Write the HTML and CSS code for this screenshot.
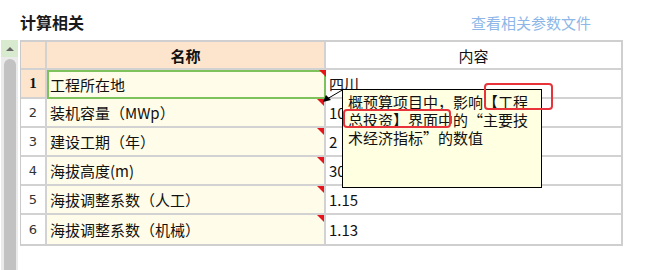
FILE: index.html
```html
<!DOCTYPE html>
<html lang="zh">
<head>
<meta charset="utf-8">
<link rel="stylesheet" href="styles.css">
</head>
<body>
<div class="page">
  <div class="topbar">
    <div class="title">计算相关</div>
    <a class="link">查看相关参数文件</a>
  </div>
  <div class="main">
    <div class="scrollbar">
      <div class="sb-up"><span class="sb-arrow"></span></div>
      <div class="sb-thumb"></div>
    </div>
    <div class="grid">
      <div class="hc rn"></div>
      <div class="hc name">名称</div>
      <div class="hc content">内容</div>

      <div class="c rn sel">1</div>
      <div class="c nm selcell"><span>工程所在地</span><i class="tri"></i></div>
      <div class="c val">四川</div>

      <div class="c rn">2</div>
      <div class="c nm"><span>装机容量（MWp）</span><i class="tri"></i></div>
      <div class="c val">10</div>

      <div class="c rn">3</div>
      <div class="c nm"><span>建设工期（年）</span><i class="tri"></i></div>
      <div class="c val">2</div>

      <div class="c rn">4</div>
      <div class="c nm"><span>海拔高度(m)</span><i class="tri"></i></div>
      <div class="c val">30</div>

      <div class="c rn">5</div>
      <div class="c nm"><span>海拔调整系数（人工）</span><i class="tri"></i></div>
      <div class="c val">1.15</div>

      <div class="c rn">6</div>
      <div class="c nm"><span>海拔调整系数（机械）</span><i class="tri"></i></div>
      <div class="c val">1.13</div>
    </div>
  </div>
  <svg class="pointer" width="30" height="20" viewBox="0 0 30 20">
    <line x1="22" y1="1" x2="5" y2="11" stroke="#000" stroke-width="1"/>
    <polygon points="1,14 4,7 9,12" fill="#000"/>
  </svg>
  <div class="tooltip">概预算项目中，影响【工程<br>总投资】界面中的“主要技<br>术经济指标”的数值</div>
  <div class="mark mark1"></div>
  <div class="mark mark2"></div>
</div>
</body>
</html>
```
FILE: styles.css
```css
html, body {
  margin: 0;
  padding: 0;
  background: #fff;
}
body {
  font-family: "Noto Sans CJK SC", "Noto Sans", sans-serif;
  color: #111;
}
.page {
  position: relative;
  width: 663px;
  height: 270px;
  overflow: hidden;
}
.topbar {
  display: flex;
  justify-content: space-between;
  align-items: center;
  padding: 11px 72px 0 20px;
  height: 22px;
}
.title {
  font-size: 16px;
  font-weight: bold;
  color: #1a1a1a;
}
.link {
  font-size: 15px;
  color: #8db7e8;
}
.main {
  display: flex;
  align-items: flex-start;
  margin-top: 7px;
  gap: 2px;
  padding-left: 1px;
}
.scrollbar {
  width: 17px;
  height: 232px;
  background: #ebebeb;
  display: flex;
  flex-direction: column;
  align-items: center;
}
.sb-up {
  width: 17px;
  height: 17px;
  background: #d8ebcf;
  display: flex;
  justify-content: center;
  align-items: center;
}
.sb-arrow {
  width: 0;
  height: 0;
  border-left: 4px solid transparent;
  border-right: 4px solid transparent;
  border-bottom: 4px solid #666;
}
.sb-thumb {
  margin-top: 2px;
  width: 12px;
  flex: 1;
  background: #c2c2c2;
  border-radius: 6px 6px 0 0;
}
.grid {
  display: grid;
  grid-template-columns: 26px 279px 295px;
  grid-template-rows: 28px repeat(6, 29px);
  border-left: 1px solid #c9c9c9;
  border-right: 2px solid #cfcfcf;
  border-top: 2px solid #cfcfcf;
  border-bottom: 2px solid #cfcfcf;
  width: 603px;
  height: 206px;
  box-sizing: border-box;
}
.hc, .c {
  border-right: 2px solid #d2d2d2;
  border-bottom: 2px solid #d2d2d2;
  box-sizing: border-box;
  display: flex;
  align-items: center;
  font-size: 15px;
}
.grid > :nth-last-child(-n+3) { border-bottom: none; }
.hc.content, .c.val { border-right: none; }
.hc { justify-content: center; }
.hc.rn, .hc.name { background: #fde5cd; }
.hc.name { font-weight: bold; }
.hc.content { background: #fff; }
.c.rn {
  justify-content: center;
  font-family: "DejaVu Sans", sans-serif;
  font-size: 13px;
  color: #333;
  background: #fff;
}
.c.rn.sel {
  background: #fde5cd;
  font-family: "Liberation Serif", serif;
  font-weight: bold;
  font-size: 15px;
  color: #111;
}
.c.nm {
  position: relative;
  background: #fffde9;
  padding-left: 3px;
}
.c.nm.selcell {
  border: 2px solid #7dc25a;
  padding-left: 1px;
}
.tri {
  position: absolute;
  top: 0;
  right: 0;
  width: 0;
  height: 0;
  border-top: 7px solid #e8141b;
  border-left: 7px solid transparent;
}
.selcell .tri { top: -2px; right: -2px; }
.c.val {
  padding-left: 3px;
  background: #fff;
}
.tooltip {
  position: absolute;
  left: 342px;
  top: 89px;
  width: 200px;
  height: 99px;
  box-sizing: border-box;
  background: #ffffe1;
  border: 1px solid #000;
  padding: 3px 0 0 5px;
  font-size: 15px;
  line-height: 18px;
  color: #111;
}
.pointer {
  position: absolute;
  left: 322px;
  top: 88px;
}
.mark {
  position: absolute;
  border: 2.5px solid #e8333a;
  border-radius: 4px;
  box-sizing: border-box;
}
.mark1 {
  left: 484px;
  top: 83px;
  width: 69px;
  height: 27px;
}
.mark2 {
  left: 343px;
  top: 109px;
  width: 108px;
  height: 19px;
}
```
